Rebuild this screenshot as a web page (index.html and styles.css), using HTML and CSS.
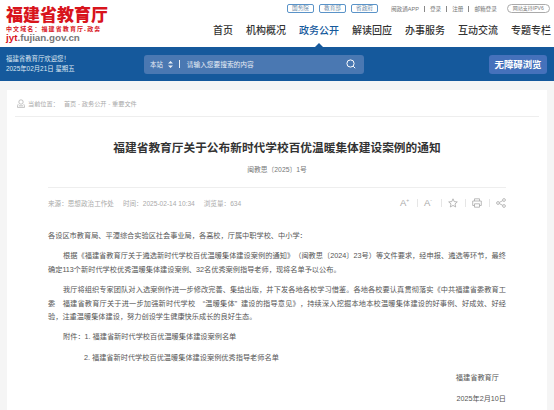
FILE: index.html
```html
<!DOCTYPE html>
<html lang="zh-CN">
<head>
  <meta charset="UTF-8" />
  <title>福建省教育厅关于公布新时代学校百优温暖集体建设案例的通知</title>
  <link rel="stylesheet" href="styles.css">
</head>
<body>

<!-- Header -->
<header class="header">
  <div class="logo">
    <div class="logo-name">福建省教育厅</div>
    <div class="logo-domain">中文域名&#xFF1A;福建省教育厅.政务</div>
    <div class="logo-url"><span class="logo-url-red">jyt</span>.fujian.gov.cn</div>
  </div>
  <div class="header-right">
    <div class="topbar">
      <div class="topbar-tags">
        <a class="tag">国务院</a>
        <a class="tag">教育部</a>
        <a class="tag">省政府</a>
      </div>
      <div class="topbar-links">
        <a>闽政通APP</a><i></i>
        <a>登录</a><i></i>
        <a>注册</a><i></i>
        <a>邮箱登录</a>
      </div>
      <div class="ipv6">网站支持IPV6</div>
    </div>
    <nav class="nav">
      <a>首页</a>
      <a>机构概况</a>
      <a class="active">政务公开</a>
      <a>解读回应</a>
      <a>办事服务</a>
      <a>互动交流</a>
      <a>专题专栏</a>
    </nav>
  </div>
</header>

<!-- Blue band -->
<div class="band">
  <div class="welcome">
    <div>福建省教育厅欢迎您&#xFF01;</div>
    <div>2025年02月21日 星期五</div>
  </div>
  <div class="search">
    <span class="search-scope">本站</span>
    <svg class="updown" width="5" height="7" viewBox="0 0 5 7"><path d="M2.5 0L5 2.6H0zM2.5 7L0 4.4H5z" fill="#e8eef6"/></svg>
    <i class="search-line"></i>
    <span class="search-hint">请输入您要搜索的内容</span>
    <svg class="search-icon" width="10" height="10" viewBox="0 0 10 10" fill="none" stroke="#fff" stroke-width="1"><circle cx="4.5" cy="4.5" r="3.6"/><path d="M7.2 7.2L9.2 9.2"/></svg>
  </div>
  <div class="access">无障碍浏览</div>
</div>

<!-- Article -->
<div class="page">
  <div class="card">
    <div class="crumb">
      <svg width="8" height="9" viewBox="0 0 8 9" fill="none" stroke="#aaa" stroke-width="0.7"><circle cx="4" cy="3" r="2.2"/><path d="M1.2 5.2C0.6 6 0.5 7 0.5 8.4H7.5C7.5 7 7.4 6 6.8 5.2M2 6.8H6"/></svg>
      <span class="crumb-label">当前位置&#xFF1A;</span>
      <span>首页 - 政务公开 - 重要文件</span>
    </div>

    <div class="article">
      <h1 class="title">福建省教育厅关于公布新时代学校百优温暖集体建设案例的通知</h1>
      <div class="docno">闽教思&#x3014;2025&#x3015;1号</div>

      <div class="meta">
        <div class="meta-info">
          <span>来源&#xFF1A;思想政治工作处</span>
          <span>时间&#xFF1A;2025-02-14 10:34</span>
          <span>浏览量&#xFF1A;634</span>
        </div>
        <div class="tools">
          <span class="tool-font">A<sup>+</sup></span><i></i>
          <span class="tool-font">A<sup>-</sup></span><i></i>
          <svg width="10" height="10" viewBox="0 0 10 10" fill="none" stroke="#aaa" stroke-width="0.8"><path d="M5 .8L6.2 3.6 9.3 3.9 7 5.9 7.7 9 5 7.4 2.3 9 3 5.9.7 3.9 3.8 3.6z"/></svg><i></i>
          <svg width="10" height="10" viewBox="0 0 10 10" fill="none" stroke="#aaa" stroke-width="0.8"><path d="M2.5 3V.8H7.5V3M2.5 7.5H.7V3H9.3V7.5H7.5M2.5 5.8H7.5V9.2H2.5z"/></svg><i></i>
          <svg width="10" height="10" viewBox="0 0 10 10" fill="none" stroke="#aaa" stroke-width="0.8"><circle cx="2" cy="5" r="1.4"/><circle cx="8" cy="2" r="1.4"/><circle cx="8" cy="8" r="1.4"/><path d="M3.3 4.4L6.7 2.7M3.3 5.6L6.7 7.3"/></svg>
        </div>
      </div>

      <div class="content">
        <p>各设区市教育局、平潭综合实验区社会事业局&#xFF0C;各高校&#xFF0C;厅属中职学校、中小学&#xFF1A;</p>
        <p class="indent">根据《福建省教育厅关于遴选新时代学校百优温暖集体建设案例的通知》&#xFF08;闽教思&#x3014;2024&#x3015;23号&#xFF09;等文件要求&#xFF0C;经申报、遴选等环节&#xFF0C;最终确定113个新时代学校优秀温暖集体建设案例、32名优秀案例指导老师&#xFF0C;现将名单予以公布。</p>
        <p class="indent">我厅将组织专家团队对入选案例作进一步修改完善、集结出版&#xFF0C;并下发各地各校学习借鉴。各地各校要认真贯彻落实《中共福建省委教育工委&#x3000;福建省教育厅关于进一步加强新时代学校&#x3000;&#x201C;温暖集体&#x201D;&#x2002;建设的指导意见》&#xFF0C;持续深入挖掘本地本校温暖集体建设的好事例、好成效、好经验&#xFF0C;注重温暖集体建设&#xFF0C;努力创设学生健康快乐成长的良好生态。</p>
        <p class="indent">附件&#xFF1A;1. 福建省新时代学校百优温暖集体建设案例名单</p>
        <p class="attach2">2. 福建省新时代学校百优温暖集体建设案例优秀指导老师名单</p>
        <p class="sign">福建省教育厅</p>
        <p class="date">2025年2月10日</p>
      </div>
    </div>
  </div>
</div>

</body>
</html>
```

FILE: styles.css
```css
* {
  margin: 0;
  padding: 0;
  box-sizing: border-box;
  font-family: "Liberation Sans", "Noto Sans CJK SC", sans-serif;
}

body {
  height: 410px;
  overflow: hidden;
  background: #f5f5f5;
}

.header {
  height: 47px;
  background: #fff;
  display: flex;
  justify-content: space-between;
  padding: 0 3px 0 6px;
}

.logo {
  padding-top: 6px;
}

.logo-name {
  font-size: 17px;
  line-height: 19px;
  font-weight: 900;
  color: #d8141c;
}

.logo-domain {
  font-family: "Noto Sans CJK SC", sans-serif;
  font-size: 6px;
  line-height: 8px;
  font-weight: 700;
  color: #d8141c;
  letter-spacing: 1.1px;
  white-space: nowrap;
}

.logo-url {
  font-size: 9.8px;
  line-height: 10px;
  font-weight: 700;
  color: #777;
}

.logo-url-red {
  color: #d8141c;
}

.header-right {
  width: 341px;
  display: flex;
  flex-direction: column;
}

.topbar {
  height: 16px;
  padding-top: 4px;
  display: flex;
  align-items: flex-start;
  font-size: 5.6px;
  color: #777;
}

.topbar-tags {
  display: flex;
  gap: 5px;
  margin-left: 77px;
}

.tag {
  width: 27px;
  height: 9px;
  line-height: 7px;
  border: 1px solid #5a93c8;
  border-radius: 2px;
  text-align: center;
  color: #6a8aa8;
}

.topbar-links {
  display: flex;
  align-items: center;
  height: 9px;
  margin-left: 13px;
  gap: 5px;
}

.topbar-links i {
  width: 1px;
  height: 6px;
  background: #888;
}

.ipv6 {
  margin-left: 10px;
  width: 43px;
  height: 9px;
  line-height: 7px;
  border: 1px solid #aaa;
  border-radius: 5px;
  text-align: center;
  font-size: 5px;
  white-space: nowrap;
}

.nav {
  display: flex;
  gap: 13px;
  justify-content: flex-end;
  padding-top: 7px;
}

.nav a {
  position: relative;
  font-size: 10px;
  line-height: 16px;
  font-weight: 500;
  color: #333;
  white-space: nowrap;
}

.nav a.active {
  color: #15599c;
}

.nav a.active::after {
  content: "";
  position: absolute;
  left: 50%;
  top: 20px;
  margin-left: -4px;
  border-left: 4px solid transparent;
  border-right: 4px solid transparent;
  border-bottom: 4px solid #15599c;
}

.band {
  height: 34px;
  background: #15599c;
  display: flex;
  align-items: center;
  padding: 0 7px 0 6px;
}

.welcome {
  width: 138px;
  font-size: 6.4px;
  line-height: 10px;
  color: #dfe8f2;
}

.search {
  width: 220px;
  height: 19px;
  background: #4a78b2;
  border-radius: 3px;
  display: flex;
  align-items: center;
  padding: 0 8px 0 6px;
  font-size: 6.4px;
  color: #e8eef6;
}

.updown {
  margin-left: 5px;
}

.search-line {
  width: 1px;
  height: 8px;
  background: #e8eef6;
  margin: 0 7px 0 6px;
}

.search-hint {
  flex: 1;
  font-size: 6.7px;
}

.access {
  margin-left: auto;
  width: 58px;
  height: 19px;
  line-height: 19px;
  background: #4571bb;
  border-radius: 3px;
  text-align: center;
  color: #fff;
  font-size: 9.4px;
  font-weight: 700;
  white-space: nowrap;
}

.page {
  padding: 9px 7px 0;
}

.card {
  background: #fff;
  height: 330px;
  padding: 0 8px;
}

.crumb {
  height: 27px;
  display: flex;
  align-items: center;
  gap: 3px;
  padding-left: 2px;
  border-bottom: 1px solid #eee;
  font-size: 6.2px;
  color: #aaa;
}

.crumb-label {
  margin-right: 2px;
}

.article {
  padding: 0 33px;
}

.title {
  margin-top: 22px;
  font-size: 11.7px;
  line-height: 18px;
  font-weight: 700;
  color: #333;
  text-align: center;
  white-space: nowrap;
}

.docno {
  margin-top: 8px;
  font-size: 6.8px;
  line-height: 10px;
  color: #777;
  text-align: center;
}

.meta {
  margin-top: 12px;
  border-top: 1px solid #eee;
  height: 30px;
  display: flex;
  justify-content: space-between;
  align-items: center;
  font-size: 6.6px;
  color: #aaa;
}

.meta-info {
  display: flex;
  gap: 9px;
}

.tools {
  display: flex;
  align-items: center;
  gap: 6.5px;
}

.tools i {
  width: 1px;
  height: 8px;
  background: #e6e6e6;
}

.tool-font {
  width: 10px;
  font-size: 9.5px;
  color: #aaa;
}

.tool-font sup {
  font-size: 5px;
  line-height: 0;
}

.content {
  margin-top: 12px;
  font-family: "Noto Sans CJK SC", sans-serif;
  font-size: 7.2px;
  line-height: 13.4px;
  color: #555;
  text-spacing-trim: space-all;
}

.content p {
  margin-bottom: 7px;
  text-align: justify;
}

.content .indent {
  text-indent: 15px;
}

.content .attach2 {
  padding-left: 36px;
}

.content .sign {
  text-align: right;
  padding-right: 7px;
}

.content .date {
  text-align: right;
}
```
